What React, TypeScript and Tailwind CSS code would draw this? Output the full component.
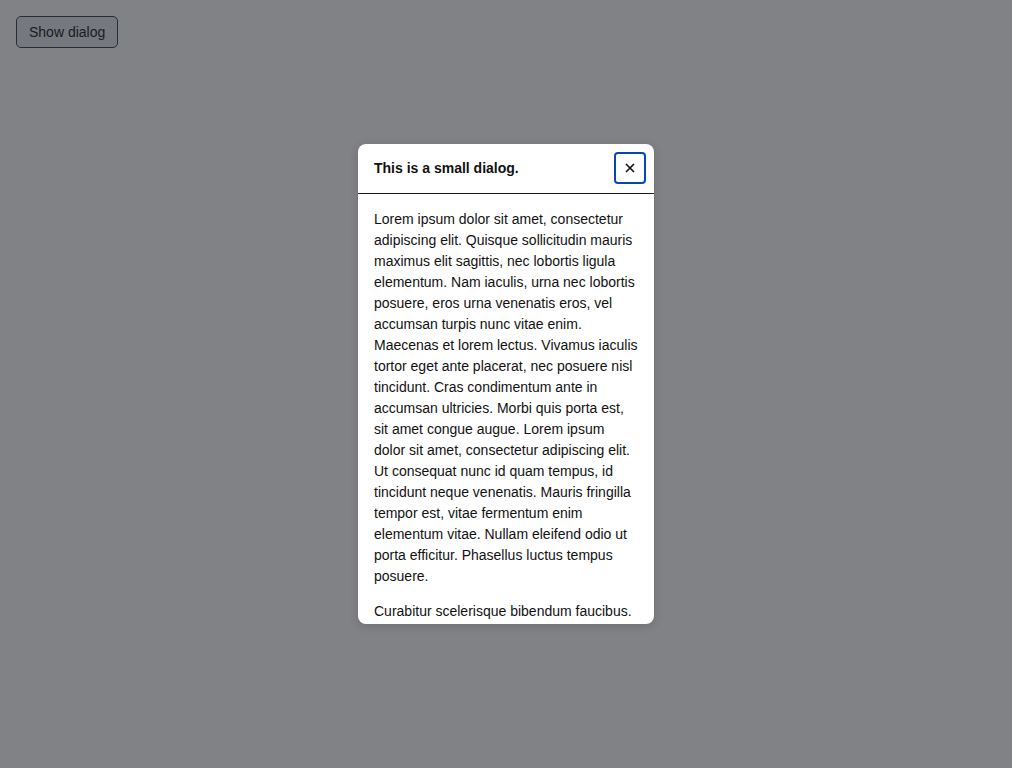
const LOREM =
  "Lorem ipsum dolor sit amet, consectetur adipiscing elit. Quisque sollicitudin mauris maximus elit sagittis, nec lobortis ligula elementum. Nam iaculis, urna nec lobortis posuere, eros urna venenatis eros, vel accumsan turpis nunc vitae enim. Maecenas et lorem lectus. Vivamus iaculis tortor eget ante placerat, nec posuere nisl tincidunt. Cras condimentum ante in accumsan ultricies. Morbi quis porta est, sit amet congue augue. Lorem ipsum dolor sit amet, consectetur adipiscing elit. Ut consequat nunc id quam tempus, id tincidunt neque venenatis. Mauris fringilla tempor est, vitae fermentum enim elementum vitae. Nullam eleifend odio ut porta efficitur. Phasellus luctus tempus posuere.";

const LOREM_2 =
  "Curabitur scelerisque bibendum faucibus. Donec in nisi vel nibh tincidunt luctus. Aliquam erat volutpat. Sed sit amet justo non neque pharetra tempor.";

export default function App() {
  return (
    <div className="relative h-[768px] w-full bg-[#818285] font-['Liberation_Sans',Arial,sans-serif] text-[#111]">
      <div className="p-4">
        <button className="h-8 rounded-[5px] border border-[#2a2c30] bg-[#75787e] px-3 text-sm text-[#1a1b1d]">
          Show dialog
        </button>
      </div>

      {/* Dialog */}
      <div className="absolute left-[358px] top-[144px] flex h-[480px] w-[296px] flex-col overflow-hidden rounded-lg bg-white shadow-[0_2px_10px_rgba(0,0,0,0.15)]">
        <div className="flex shrink-0 items-center justify-between border-b border-[#1a1a1a] pt-2 pb-[9px] pl-4 pr-2">
          <h2 className="text-sm font-bold">This is a small dialog.</h2>
          <button
            aria-label="Close"
            className="flex h-8 w-8 items-center justify-center rounded-[4px] border-2 border-[#0747b0] bg-white"
          >
            <svg width="10" height="10" viewBox="0 0 10 10">
              <path d="M1 1L9 9M9 1L1 9" stroke="#111" strokeWidth="1.6" />
            </svg>
          </button>
        </div>
        <div className="flex-1 overflow-hidden px-4 pt-[15px] text-sm leading-[21px]">
          <p>{LOREM}</p>
          <p className="mt-[14px]">{LOREM_2}</p>
        </div>
      </div>
    </div>
  );
}
